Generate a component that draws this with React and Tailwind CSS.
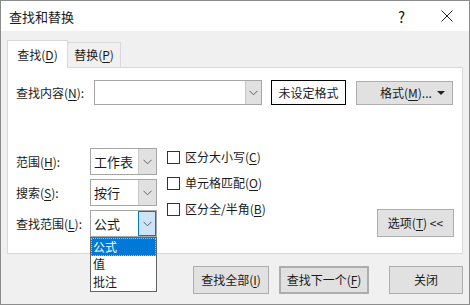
import React from "react";

// 小箭头
const Chevron = ({ color = "#606060" }) => (
    <svg width="9" height="6" viewBox="0 0 9 6">
        <path d="M0.5 0.8 L4.5 4.8 L8.5 0.8" fill="none" stroke={color} strokeWidth="1" />
    </svg>
);

const U = ({ children }) => <span className="underline underline-offset-2">{children}</span>;

const Select = ({ value, active, children }) => (
    <div className="relative">
        <div className="flex h-[27px] w-[67px] border border-[#a6a6a6] bg-white">
            <div className="flex flex-1 items-center pl-[3px] text-[13px]">{value}</div>
            <div
                className={
                    active
                        ? "flex w-[18px] items-center justify-center border border-[#0078d7] bg-[#cce4f7]"
                        : "flex w-[18px] items-center justify-center border-l border-[#c8c8c8] bg-[#e1e1e1]"
                }
            >
                <Chevron />
            </div>
        </div>
        {children}
    </div>
);

const Checkbox = ({ label, k }) => (
    <div className="flex h-[26px] items-center gap-[5px]">
        <div className="h-[13px] w-[13px] border border-[#333333] bg-white" />
        <span className="text-[12px]">
            {label}(<U>{k}</U>)
        </span>
    </div>
);

const Button = ({ children, className = "" }) => (
    <div
        className={
            "flex h-[28px] items-center justify-center border border-[#adadad] bg-[#e1e1e1] text-[12px] " +
            className
        }
    >
        {children}
    </div>
);

const App = () => {
    return (
        <div className="flex h-[305px] w-[470px] flex-col border border-[#8c8c8c] bg-[#f0f0f0] font-['Microsoft_YaHei_UI','Noto_Sans_CJK_SC',sans-serif] leading-none text-[#1a1a1a]">
            {/* 标题栏 */}
            <div className="flex h-[30px] items-center bg-white pl-[8px]">
                <span className="flex-1 text-[13px]">查找和替换</span>
                <span className="mr-[36px] text-[15px]">?</span>
                <svg className="mr-[16px]" width="12" height="12" viewBox="0 0 12 12">
                    <path d="M0.5 0.5 L11.5 11.5 M11.5 0.5 L0.5 11.5" stroke="#222" strokeWidth="1" />
                </svg>
            </div>

            <div className="px-[6px]">
                {/* 标签页 */}
                <div className="mt-[9px] flex items-end">
                    <div className="relative -mb-px z-10 flex h-[28px] w-[61px] items-center justify-center border border-b-0 border-[#d9d9d9] bg-white text-[12px]">
                        查找(<U>D</U>)
                    </div>
                    <div className="flex h-[25px] w-[53px] items-center justify-center border border-b-0 border-l-0 border-[#d9d9d9] bg-[#f0f0f0] text-[12px]">
                        替换(<U>P</U>)
                    </div>
                </div>

                {/* 内容面板 */}
                <div className="relative flex h-[187px] w-[456px] flex-col border border-[#d9d9d9] bg-white pl-[8px] pt-[12px]">
                    <div className="flex items-center">
                        <span className="w-[78px] text-[12px]">
                            查找内容(<U>N</U>):
                        </span>
                        <div className="flex h-[25px] w-[168px] border border-[#a6a6a6] bg-white">
                            <div className="flex-1" />
                            <div className="flex w-[16px] items-center justify-center border-l border-[#c8c8c8] bg-[#e1e1e1]">
                                <Chevron />
                            </div>
                        </div>
                        <div className="ml-[9px] flex h-[25px] w-[75px] items-center justify-center border border-black text-[12px]">
                            未设定格式
                        </div>
                        <div className="ml-[10px] flex h-[24px] w-[97px] items-center border border-[#adadad] bg-[#e1e1e1] text-[12px]">
                            <span className="flex-1 pl-[23px]">
                                格式(<U>M</U>)...
                            </span>
                            <svg className="mr-[7px]" width="8" height="4" viewBox="0 0 8 4">
                                <path d="M0 0 L8 0 L4 4 Z" fill="#222" />
                            </svg>
                        </div>
                    </div>

                    <div className="mt-[43px] flex items-start">
                        <div className="flex flex-col gap-[4px]">
                            <div className="flex items-center">
                                <span className="w-[74px] text-[12px]">
                                    范围(<U>H</U>):
                                </span>
                                <Select value="工作表" />
                            </div>
                            <div className="flex items-center">
                                <span className="w-[74px] text-[12px]">
                                    搜索(<U>S</U>):
                                </span>
                                <Select value="按行" />
                            </div>
                            <div className="flex items-center">
                                <span className="w-[74px] text-[12px]">
                                    查找范围(<U>L</U>):
                                </span>
                                <Select value="公式" active>
                                    <div className="absolute left-0 top-full z-20 flex w-[67px] flex-col border border-[#646464] bg-white text-[12px]">
                                        <div className="flex h-[17.5px] items-center bg-[#0078d7] pl-[2px] text-white outline-1 outline-dotted outline-offset-[-1px] outline-[#9cc8ee]">
                                            公式
                                        </div>
                                        <div className="flex h-[17.5px] items-center pl-[2px]">值</div>
                                        <div className="flex h-[17.5px] items-center pl-[2px]">批注</div>
                                    </div>
                                </Select>
                            </div>
                        </div>

                        <div className="-mt-[4px] ml-[10px] flex flex-col">
                            <Checkbox label="区分大小写" k="C" />
                            <Checkbox label="单元格匹配" k="O" />
                            <Checkbox label="区分全/半角" k="B" />
                        </div>

                        <div className="flex-1" />
                        <Button className="mr-[8px] w-[77px] self-end">
                            选项(<U>T</U>)&nbsp;&lt;&lt;
                        </Button>
                    </div>
                </div>

                {/* 底部按钮 */}
                <div className="mt-[12px] flex w-[456px] justify-end">
                    <Button className="w-[76px]">
                        查找全部(<U>I</U>)
                    </Button>
                    <Button className="ml-[10px] w-[90px] border-2 border-[#0078d7]">
                        查找下一个(<U>F</U>)
                    </Button>
                    <Button className="ml-[20px] w-[74px]">关闭</Button>
                </div>
            </div>
        </div>
    );
};

export default App;
